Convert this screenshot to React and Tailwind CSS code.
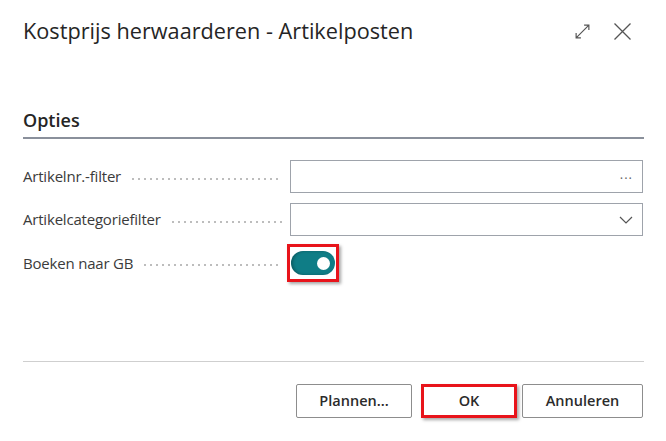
import { useState } from 'react';

const font = { fontFamily: '"Open Sans", "Noto Sans", sans-serif' };

const Leader = () => (
  <span className="flex-1 ml-[9px] mr-[8px] h-[2px] self-center mt-[4px] bg-[radial-gradient(circle,#bdbdbd_0.8px,transparent_1px)] bg-[length:6px_2px] bg-repeat-x" />
);

const Veld = ({ label, children }) => (
  <div className="flex items-center">
    <div className="w-[267px] flex items-center text-[15px] text-[#3b3b3b] tracking-[-0.2px]">
      <span>{label}</span>
      <Leader />
    </div>
    <div className="flex-1">{children}</div>
  </div>
);

const App = () => {
  const [boeken, setBoeken] = useState(true);

  return (
    <div className="w-[666px] h-[441px] bg-white flex flex-col px-[23px]" style={font}>
      <div className="flex items-center justify-between pt-[15px] h-[47px]">
        <h1 className="text-[21.7px] text-[#252525] leading-[28px]">
          Kostprijs herwaarderen - Artikelposten
        </h1>
        <div className="flex items-center gap-[22px] mr-[11px] text-[#555]">
          <svg width="17" height="17" viewBox="0 0 16 16" fill="none" stroke="currentColor" strokeWidth="1.1">
            <path d="M2 14 L14 2 M9.5 2 H14 V6.5 M2 9.5 V14 H6.5" />
          </svg>
          <svg width="19" height="19" viewBox="0 0 19 19" fill="none" stroke="currentColor" strokeWidth="1.3">
            <path d="M1.5 1.5 L17.5 17.5 M17.5 1.5 L1.5 17.5" />
          </svg>
        </div>
      </div>

      <div className="mt-[60px] border-b-2 border-[#8a909b] pb-[4px] mr-[-1px]">
        <h2 className="text-[18px] font-semibold text-[#252525] leading-[26px]">Opties</h2>
      </div>

      <div className="flex flex-col mt-[21px] gap-[10px]">
        <Veld label="Artikelnr.-filter">
          <div className="h-[33px] border border-[#9ea3ab] flex items-center justify-end pr-[9px]">
            <span className="text-[#666] text-[13px] tracking-[1px] leading-none pb-[4px]">...</span>
          </div>
        </Veld>
        <Veld label="Artikelcategoriefilter">
          <div className="h-[33px] border border-[#9ea3ab] flex items-center justify-end pr-[9px]">
            <svg width="14" height="8" viewBox="0 0 14 8" fill="none" stroke="#555" strokeWidth="1.2">
              <path d="M1 1 L7 7 L13 1" />
            </svg>
          </div>
        </Veld>
        <Veld label="Boeken naar GB">
          <div className="h-[34px] flex items-center">
            <button
              onClick={() => setBoeken(!boeken)}
              className="ml-[-3px] border-[3px] border-[#e8141b] px-[1px] py-[4px] shadow-[2px_2px_3px_rgba(0,0,0,0.35)]"
            >
              <span
                className={
                  boeken
                    ? 'w-[44px] h-[24px] rounded-full bg-[#0f7d86] flex items-center justify-end px-[5px] shadow-[inset_2px_0_3px_rgba(0,0,0,0.25)]'
                    : 'w-[44px] h-[24px] rounded-full bg-white border border-[#555] flex items-center justify-start px-[5px]'
                }
              >
                <span className={boeken ? 'w-[13px] h-[13px] rounded-full bg-white' : 'w-[13px] h-[13px] rounded-full bg-[#555]'} />
              </span>
            </button>
          </div>
        </Veld>
      </div>

      <div className="flex-1" />

      <div className="border-t border-[#cfcfcf] mr-[-1px]" />
      <div className="flex justify-end mt-[22px] mb-[23px]">
        <button className="w-[116px] h-[34px] border border-[#8d8d8d] rounded-[2px] text-[14.5px] font-semibold text-[#2b2b2b]">
          Plannen...
        </button>
        <button className="ml-[9px] w-[96px] h-[34px] border-[3px] border-[#e8141b] shadow-[2px_2px_3px_rgba(0,0,0,0.35)] text-[14.5px] font-semibold text-[#2b2b2b]">
          OK
        </button>
        <button className="ml-[5px] w-[121px] h-[34px] border border-[#8d8d8d] rounded-[2px] text-[14.5px] font-semibold text-[#2b2b2b]">
          Annuleren
        </button>
      </div>
    </div>
  );
};

export default App;
